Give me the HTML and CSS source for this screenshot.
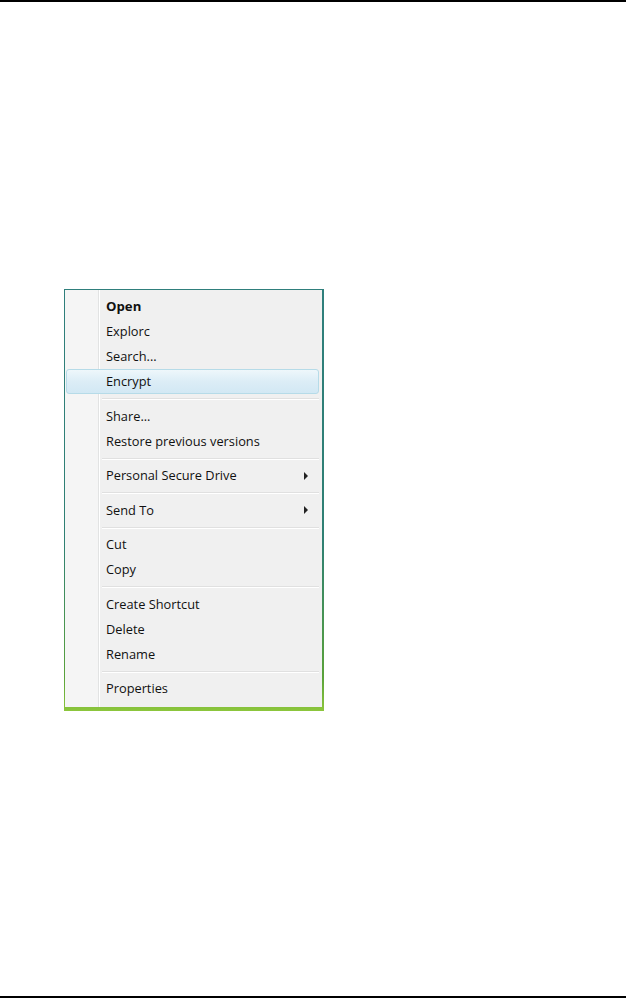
FILE: index.html
```html
<!DOCTYPE html>
<html>
<head>
<meta charset="utf-8">
<link rel="stylesheet" href="styles.css">
</head>
<body>
<div class="page">
  <div class="rule"></div>
  <div class="stage">
    <div class="backdrop">
      <div class="menu">
        <div class="item bold">Open</div>
        <div class="item">Explorc</div>
        <div class="item">Search...</div>
        <div class="item hl">Encrypt</div>
        <div class="sep"></div>
        <div class="item">Share...</div>
        <div class="item">Restore previous versions</div>
        <div class="sep"></div>
        <div class="item sub">Personal Secure Drive<span class="arrow"></span></div>
        <div class="sep"></div>
        <div class="item sub">Send To<span class="arrow"></span></div>
        <div class="sep"></div>
        <div class="item">Cut</div>
        <div class="item">Copy</div>
        <div class="sep"></div>
        <div class="item">Create Shortcut</div>
        <div class="item">Delete</div>
        <div class="item">Rename</div>
        <div class="sep"></div>
        <div class="item">Properties</div>
      </div>
    </div>
  </div>
  <div class="rule bottom"></div>
</div>
</body>
</html>
```

FILE: styles.css
```css
html, body {
  margin: 0;
  padding: 0;
  background: #fff;
}
.page {
  width: 628px;
  height: 998px;
  display: flex;
  flex-direction: column;
}
.rule {
  height: 2px;
  background: #000;
  margin-right: 2px;
}
.rule.bottom {
  margin-top: auto;
  margin-bottom: 0;
}
.stage {
  padding-left: 64px;
  padding-top: 287px;
}
.backdrop {
  width: 260px;
  height: 422px;
  background: linear-gradient(180deg, #2f7f7c 0%, #2f8073 60%, #5aa23a 92%, #8cc63c 100%);
  padding: 1px 2px 4px 1px;
  box-sizing: border-box;
}
.menu {
  height: 100%;
  box-sizing: border-box;
  padding: 4px 2px 6px 1px;
  display: flex;
  flex-direction: column;
  background:
    linear-gradient(90deg, #f5f5f5 0, #f5f5f5 33px, #e2e3e3 33px, #e2e3e3 34px, #ffffff 34px, #ffffff 35px, #f0f0f0 35px);
  font-family: "Open Sans", "Noto Sans", sans-serif;
  font-size: 12.8px;
  color: #111;
}
.item {
  height: 25px;
  line-height: 25px;
  padding-left: 40px;
  display: flex;
  align-items: center;
  white-space: nowrap;
  box-sizing: border-box;
}
.bold {
  font-weight: 700;
  font-size: 13.2px;
}
.hl {
  border: 1px solid #b6dbe8;
  border-radius: 3px;
  background: linear-gradient(180deg, #eef7fb 0%, #dcedf6 50%, #d2e8f4 100%);
  padding-left: 39px;
  margin-right: 1px;
}
.sub {
  justify-content: space-between;
  padding-right: 12px;
}
.arrow {
  width: 0;
  height: 0;
  border-top: 4px solid transparent;
  border-bottom: 4px solid transparent;
  border-left: 4px solid #222;
}
.sep {
  height: 10px;
  margin-left: 36px;
  margin-right: 1px;
  background: linear-gradient(180deg, transparent 0, transparent 4px, #e0e0e0 4px, #e0e0e0 5px, #ffffff 5px, #ffffff 6px, transparent 6px);
}
```
